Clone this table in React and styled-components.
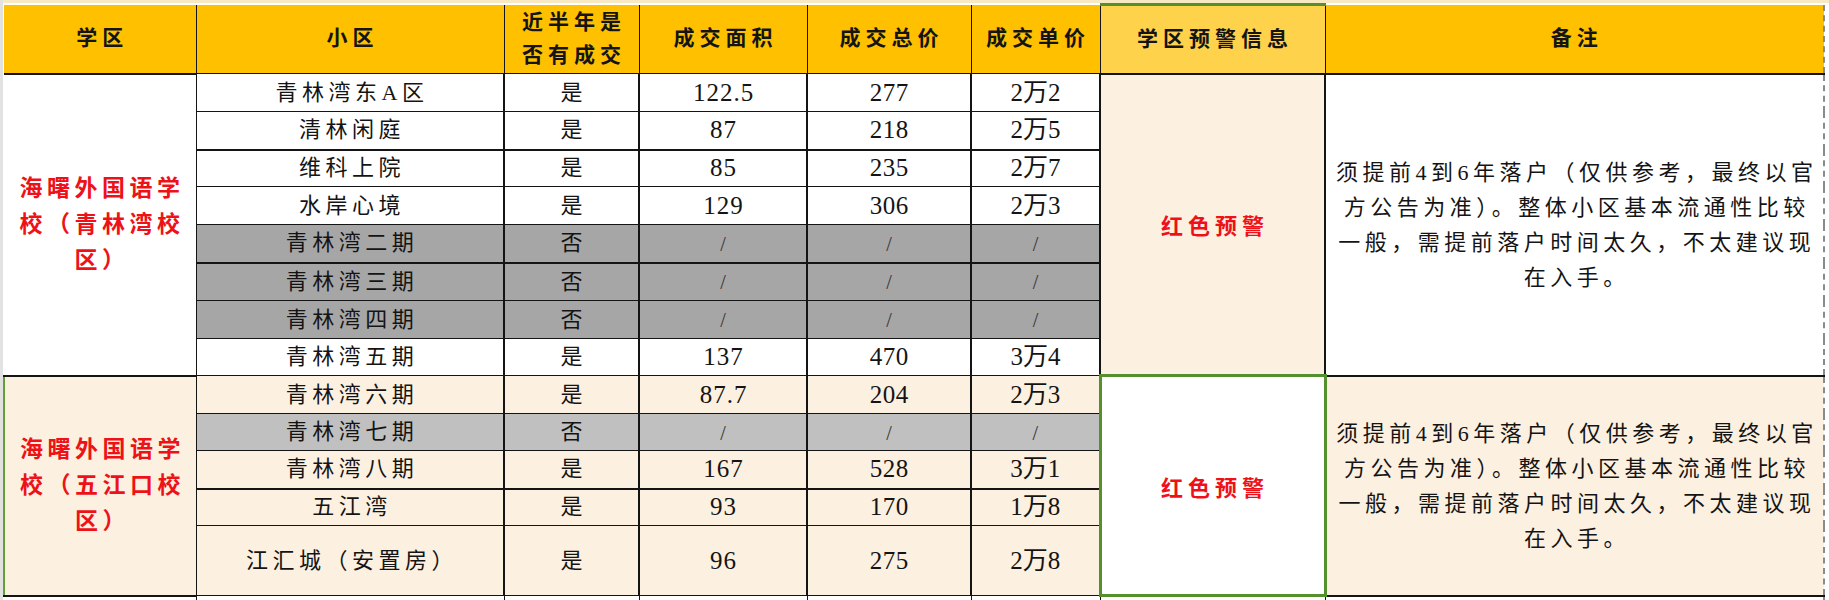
import React from "react";
import styled, { createGlobalStyle } from "styled-components";

const GlobalStyle = createGlobalStyle`
  html, body {
    margin: 0;
    padding: 0;
    background: #fff;
    overflow: hidden;
  }
  body {
    font-family: "Liberation Serif", "Noto Sans CJK SC", serif;
  }
`;

const CREAM = "#fcf0e1";
const INK = "#141414";
const RED = "#ee1118";
const GREEN = "#55902f";

const Sheet = styled.div`
  width: 1829px;
  height: 600px;
  box-sizing: border-box;
  padding: 3px 0 0 3px;
  background: linear-gradient(#f8e9c3 0 3px, #fff 3px);
  box-shadow: inset 3px 0 0 #e2e2e2;
  overflow: hidden;
`;

const Grid = styled.table`
  border-collapse: collapse;
  table-layout: fixed;
  width: 1820px;
  color: ${INK};
`;

const Col = styled.col`
  width: ${(p) => p.$w}px;
`;

const Row = styled.tr`
  height: ${(p) => p.$h}px;
`;

const Head = styled.th`
  padding: 0 0 0 5px;
  background: ${(p) => (p.$warn ? "#ffd24c" : "#ffc000")};
  border-left: ${(p) => (p.$first ? "none" : `1px solid ${INK}`)};
  border-right: ${(p) => (p.$last ? "2px dashed #8a8a8a" : `1px solid ${INK}`)};
  border-top: ${(p) => (p.$warn ? `3px solid ${GREEN}` : "none")};
  border-bottom: 1px solid ${INK};
  font-family: "Liberation Serif", "Noto Sans CJK SC", serif;
  font-size: 21px;
  font-weight: 700;
  letter-spacing: 5px;
  line-height: 33px;
  text-align: center;
  vertical-align: middle;
`;

const Cell = styled.td`
  padding: 0 0 0 ${(p) => p.$ls}px;
  background: ${(p) => p.$bg};
  border-left: ${(p) => (p.$thinLeft ? 1 : 2)}px solid ${INK};
  border-right: 2px solid ${INK};
  border-top: ${(p) => (p.$thick ? 2 : 1)}px solid ${INK};
  border-bottom: 1px solid ${INK};
  font-size: ${(p) => (p.$num ? 25 : 22)}px;
  letter-spacing: ${(p) => p.$ls}px;
  line-height: 26px;
  text-align: center;
  vertical-align: middle;
  white-space: nowrap;
`;

const Slash = styled.span`
  font-size: 20px;
  color: #333;
`;

const School = styled.td`
  padding: 0 0 0 4.5px;
  background: ${(p) => p.$bg};
  border-left: ${(p) => (p.$green ? `2px solid #62a03c` : "none")};
  border-right: 1px solid ${INK};
  border-top: 2px solid ${INK};
  border-bottom: 2px solid ${INK};
  color: ${RED};
  font-size: 23px;
  font-weight: 700;
  letter-spacing: 4.5px;
  line-height: 36px;
  text-align: center;
  vertical-align: middle;
`;

const Warn = styled.td`
  padding: 0 0 0 5px;
  background: ${(p) => (p.$boxed ? "#fff" : CREAM)};
  border: ${(p) => (p.$boxed ? `3px solid ${GREEN}` : `2px solid ${INK}`)};
  color: ${RED};
  font-size: 22px;
  font-weight: 700;
  letter-spacing: 5px;
  text-align: center;
  vertical-align: middle;
`;

const Note = styled.td`
  padding: 0 0 0 4.5px;
  background: ${(p) => p.$bg};
  border-left: 2px solid ${INK};
  border-right: 2px dashed #8a8a8a;
  border-top: 2px solid ${INK};
  border-bottom: 2px solid ${INK};
  font-size: 22px;
  letter-spacing: 4.5px;
  line-height: 35px;
  text-align: center;
  vertical-align: middle;
  white-space: nowrap;
`;

const Blank = styled.td`
  padding: 0;
  background: #fff;
  border-left: ${(p) => (p.$first ? "none" : `1px solid ${INK}`)};
  border-right: ${(p) => (p.$last ? "2px dashed #8a8a8a" : `1px solid ${INK}`)};
  border-top: 1px solid ${INK};
`;

const widths = [192, 308, 135, 168, 164, 129, 225, 499];

const groups = [
  {
    school: ["海曙外国语学", "校（青林湾校", "区）"],
    bg: "#fff",
    grey: "#a6a6a6",
    boxed: false,
    green: false,
    rows: [
      { name: "青林湾东A区", deal: "是", area: "122.5", total: "277", unit: "2万2", h: 38 },
      { name: "清林闲庭", deal: "是", area: "87", total: "218", unit: "2万5", h: 38 },
      { name: "维科上院", deal: "是", area: "85", total: "235", unit: "2万7", h: 37, thick: true },
      { name: "水岸心境", deal: "是", area: "129", total: "306", unit: "2万3", h: 38 },
      { name: "青林湾二期", deal: "否", h: 38 },
      { name: "青林湾三期", deal: "否", h: 38, thick: true },
      { name: "青林湾四期", deal: "否", h: 38 },
      { name: "青林湾五期", deal: "是", area: "137", total: "470", unit: "3万4", h: 37 },
    ],
  },
  {
    school: ["海曙外国语学", "校（五江口校", "区）"],
    bg: CREAM,
    grey: "#c0c0c0",
    boxed: true,
    green: true,
    rows: [
      { name: "青林湾六期", deal: "是", area: "87.7", total: "204", unit: "2万3", h: 38 },
      { name: "青林湾七期", deal: "否", h: 37 },
      { name: "青林湾八期", deal: "是", area: "167", total: "528", unit: "3万1", h: 38 },
      { name: "五江湾", deal: "是", area: "93", total: "170", unit: "1万8", h: 37, thick: true },
      { name: "江汇城（安置房）", deal: "是", area: "96", total: "275", unit: "2万8", h: 70 },
    ],
  },
];

const note = [
  "须提前4到6年落户（仅供参考，最终以官",
  "方公告为准）。整体小区基本流通性比较",
  "一般，需提前落户时间太久，不太建议现",
  "在入手。",
];

function Lines({ items }) {
  return items.map((t, i) => (
    <React.Fragment key={i}>
      {i > 0 && <br />}
      {t}
    </React.Fragment>
  ));
}

function Value({ none, v }) {
  return none ? <Slash>/</Slash> : v;
}

function Group({ g }) {
  return g.rows.map((r, i) => {
    const none = r.deal === "否";
    const bg = none ? g.grey : g.bg;
    return (
      <Row key={r.name} $h={r.h}>
        {i === 0 && (
          <School rowSpan={g.rows.length} $bg={g.bg} $green={g.green}>
            <Lines items={g.school} />
          </School>
        )}
        <Cell $bg={bg} $ls={4.5} $thinLeft $thick={r.thick}>{r.name}</Cell>
        <Cell $bg={bg} $ls={3} $thick={r.thick}>{r.deal}</Cell>
        <Cell $bg={bg} $ls={1} $num $thick={r.thick}><Value none={none} v={r.area} /></Cell>
        <Cell $bg={bg} $ls={0.5} $num $thick={r.thick}><Value none={none} v={r.total} /></Cell>
        <Cell $bg={bg} $ls={0} $num $thick={r.thick}><Value none={none} v={r.unit} /></Cell>
        {i === 0 && (
          <>
            <Warn rowSpan={g.rows.length} $boxed={g.boxed}>红色预警</Warn>
            <Note rowSpan={g.rows.length} $bg={g.bg}>
              <Lines items={note} />
            </Note>
          </>
        )}
      </Row>
    );
  });
}

export default function App() {
  return (
    <>
      <GlobalStyle />
      <Sheet>
        <Grid>
          <colgroup>
            {widths.map((w, i) => (
              <Col key={i} $w={w} />
            ))}
          </colgroup>
          <thead>
            <Row $h={69}>
              <Head $first>学区</Head>
              <Head>小区</Head>
              <Head>
                近半年是
                <br />
                否有成交
              </Head>
              <Head>成交面积</Head>
              <Head>成交总价</Head>
              <Head>成交单价</Head>
              <Head $warn>学区预警信息</Head>
              <Head $last>备注</Head>
            </Row>
          </thead>
          <tbody>
            {groups.map((g, i) => (
              <Group key={i} g={g} />
            ))}
            <Row $h={8}>
              {widths.map((w, i) => (
                <Blank key={i} $first={i === 0} $last={i === widths.length - 1} />
              ))}
            </Row>
          </tbody>
        </Grid>
      </Sheet>
    </>
  );
}
